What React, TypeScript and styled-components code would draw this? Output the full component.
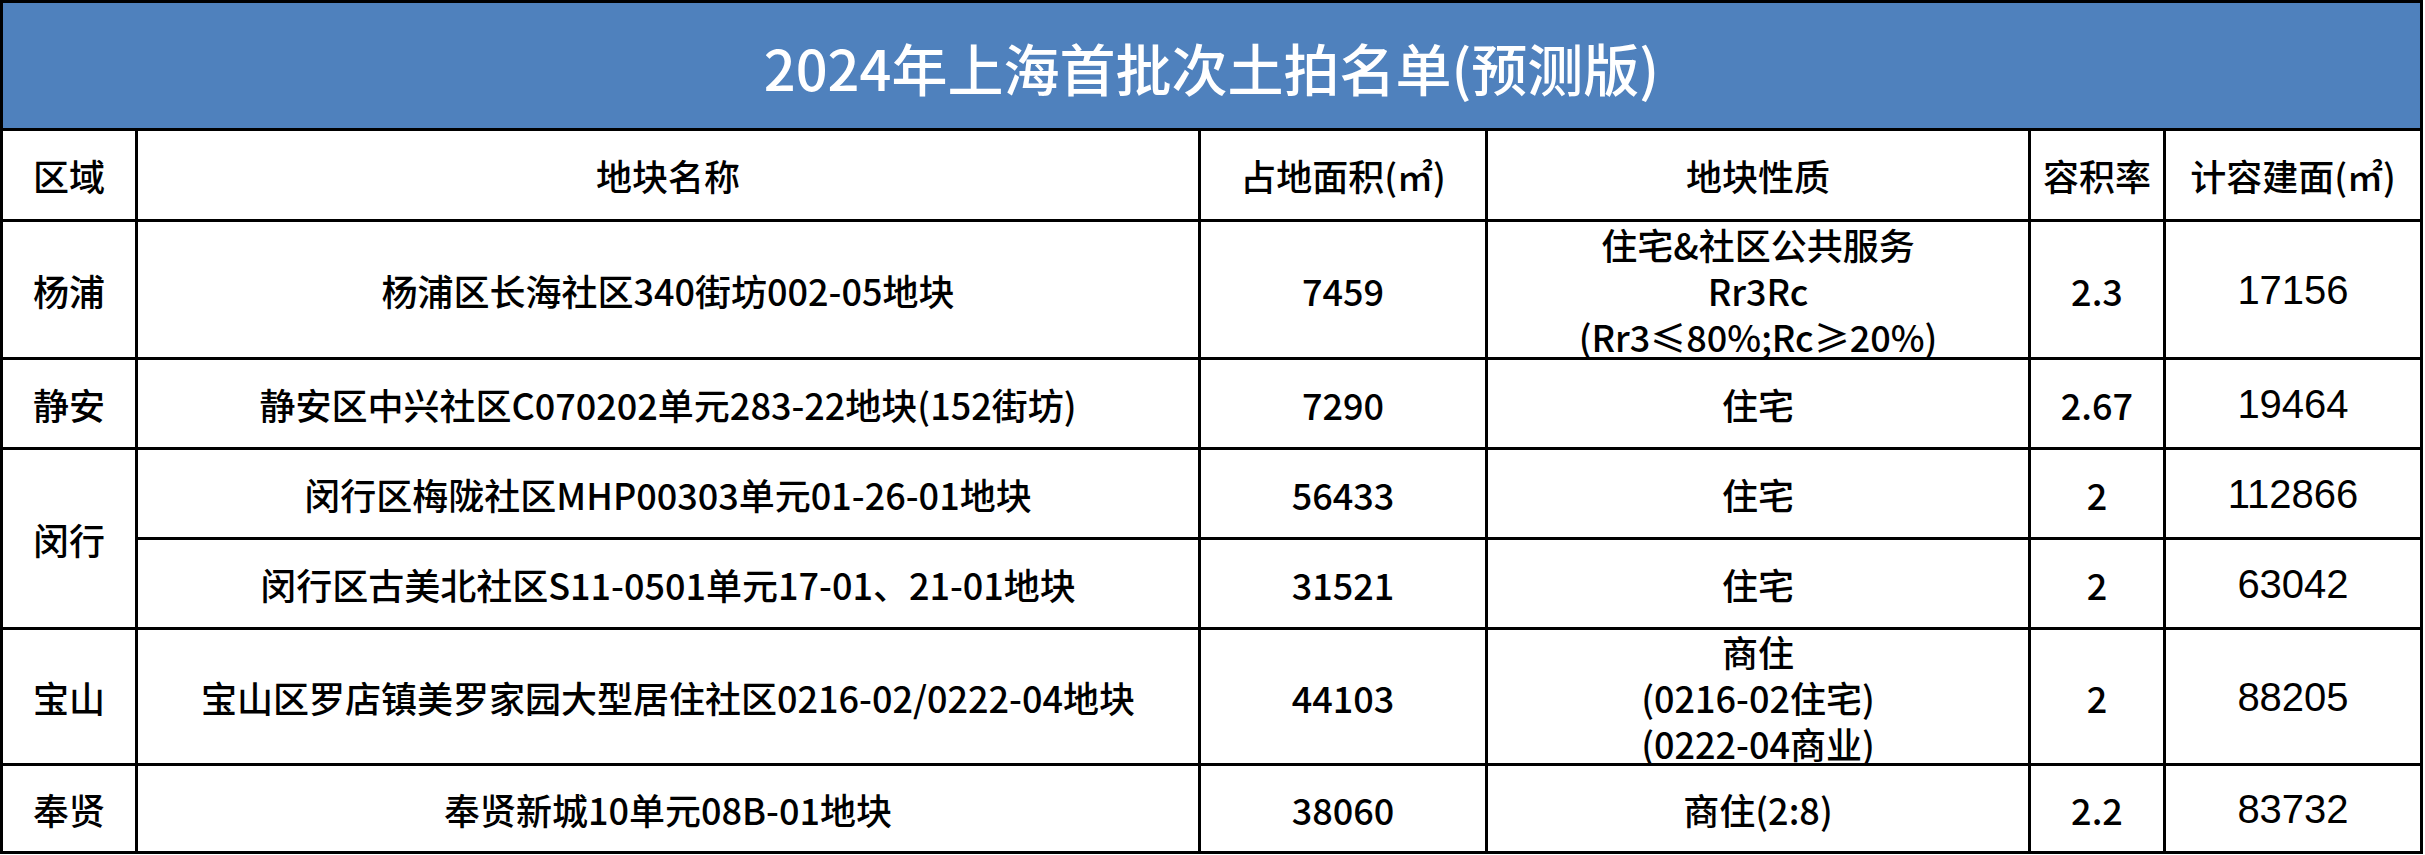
import styled, { createGlobalStyle } from 'styled-components';

const GlobalStyle = createGlobalStyle`
  html, body {
    margin: 0;
    padding: 0;
    background: #fff;
  }
  body {
    font-family: 'Noto Sans CJK SC', 'Noto Sans', sans-serif;
    color: #000;
  }
`;

const cjk = `'Noto Sans CJK SC', 'Noto Sans', sans-serif`;

const Table = styled.div`
  display: grid;
  grid-template-columns: 132px 1060px 284px 540px 132px 254px;
  grid-template-rows: 125px 88px 135px 87px 87px 87px 133px 85px;
  gap: 3px;
  padding: 3px;
  background: #000;
  width: fit-content;
`;

const Title = styled.div`
  grid-column: 1 / -1;
  background: #4f81bd;
  color: #fff;
  display: flex;
  align-items: center;
  justify-content: center;
  font-family: ${cjk};
  font-size: 56px;
  font-weight: 500;
  padding-top: 2px;
`;

const Cell = styled.div<{ $span?: number; $latin?: boolean }>`
  background: #fff;
  display: flex;
  flex-direction: column;
  align-items: center;
  justify-content: center;
  text-align: center;
  overflow: hidden;
  grid-row: ${(p) => (p.$span ? `span ${p.$span}` : 'auto')};
  font-family: ${(p) => (p.$latin ? `'Liberation Sans', Arial, sans-serif` : cjk)};
  font-size: ${(p) => (p.$latin ? '40px' : '36px')};
  font-weight: ${(p) => (p.$latin ? 400 : 500)};
  line-height: 46px;
  white-space: nowrap;
`;

const Line = styled.span`
  display: block;
`;

type Row = {
  region?: string;
  span?: number;
  name: string;
  area: string;
  use: string[];
  far: string;
  gfa: string;
};

const rows: Row[] = [
  {
    region: '杨浦',
    name: '杨浦区长海社区340街坊002-05地块',
    area: '7459',
    use: ['住宅&社区公共服务', 'Rr3Rc', '(Rr3≤80%;Rc≥20%)'],
    far: '2.3',
    gfa: '17156',
  },
  {
    region: '静安',
    name: '静安区中兴社区C070202单元283-22地块(152街坊)',
    area: '7290',
    use: ['住宅'],
    far: '2.67',
    gfa: '19464',
  },
  {
    region: '闵行',
    span: 2,
    name: '闵行区梅陇社区MHP00303单元01-26-01地块',
    area: '56433',
    use: ['住宅'],
    far: '2',
    gfa: '112866',
  },
  {
    name: '闵行区古美北社区S11-0501单元17-01、21-01地块',
    area: '31521',
    use: ['住宅'],
    far: '2',
    gfa: '63042',
  },
  {
    region: '宝山',
    name: '宝山区罗店镇美罗家园大型居住社区0216-02/0222-04地块',
    area: '44103',
    use: ['商住', '(0216-02住宅)', '(0222-04商业)'],
    far: '2',
    gfa: '88205',
  },
  {
    region: '奉贤',
    name: '奉贤新城10单元08B-01地块',
    area: '38060',
    use: ['商住(2:8)'],
    far: '2.2',
    gfa: '83732',
  },
];

const headers = ['区域', '地块名称', '占地面积(㎡)', '地块性质', '容积率', '计容建面(㎡)'];

export default function App() {
  return (
    <>
      <GlobalStyle />
      <Table>
        <Title>2024年上海首批次土拍名单(预测版)</Title>
        {headers.map((h) => (
          <Cell key={h}>{h}</Cell>
        ))}
        {rows.map((r) => (
          <>
            {r.region && <Cell $span={r.span}>{r.region}</Cell>}
            <Cell>{r.name}</Cell>
            <Cell>{r.area}</Cell>
            <Cell>
              {r.use.map((u) => (
                <Line key={u}>{u}</Line>
              ))}
            </Cell>
            <Cell>{r.far}</Cell>
            <Cell $latin>{r.gfa}</Cell>
          </>
        ))}
      </Table>
    </>
  );
}
